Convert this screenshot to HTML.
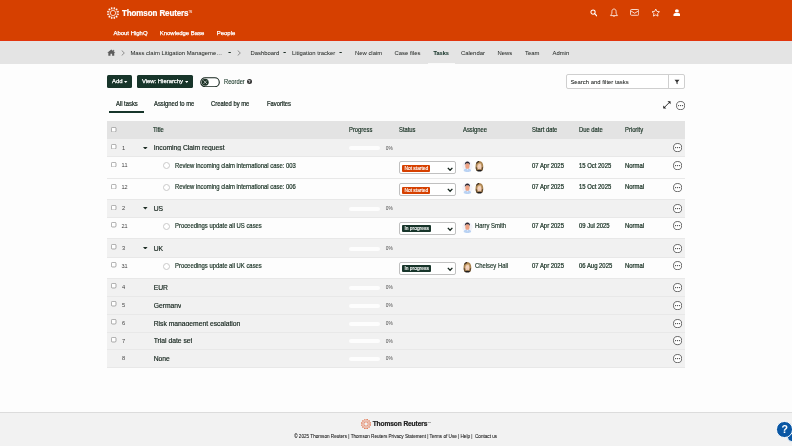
<!DOCTYPE html>
<html lang="en">
<head>
<meta charset="utf-8">
<title>Tasks - Litigation tracker</title>
<style>
*{box-sizing:border-box;margin:0;padding:0}
html,body{width:792px;height:446px;overflow:hidden;background:#fdfdfd;font-family:"Liberation Sans",Arial,sans-serif;color:#1d3a2b;-webkit-text-stroke:0.22px currentColor}
body{position:relative;will-change:transform}
.abs{position:absolute;white-space:nowrap}
#hdr{position:absolute;left:0;top:0;width:792px;height:41px;background:#d64000;border-bottom:1px solid #e2350e}
#hdr .logo-t{position:absolute;left:121.6px;top:7.2px;transform:scaleX(0.95);transform-origin:0 0;font-size:8.42px;font-weight:bold;color:#fff;letter-spacing:-0.1px;line-height:12px}
#hdr .tm{position:absolute;left:188.4px;top:10.9px;font-size:2.7px;color:#fff;line-height:4px;-webkit-text-stroke:0}
#hdr .nav{position:absolute;top:29px;font-size:5.95px;color:#fff;line-height:8px;-webkit-text-stroke:0.25px #fff}
#bc{position:absolute;left:0;top:41px;width:792px;height:23px;background:#e4e4e4}
#bc .t{position:absolute;top:7.6px;font-size:5.9px;line-height:8px;color:#2b2f2d;white-space:nowrap;-webkit-text-stroke:0.04px currentColor}
#bc .b{font-weight:bold;font-size:5.55px;color:#17352a;-webkit-text-stroke:0.1px currentColor}
.caret{position:absolute;width:0;height:0;border-left:1.9px solid transparent;border-right:1.9px solid transparent;border-top:2.2px solid #1f2f27}
.btn{position:absolute;top:74.5px;height:13.3px;background:#17352a;border-radius:1.5px;color:#fff;font-size:5.9px;line-height:13.3px;white-space:nowrap;-webkit-text-stroke:0.25px #fff}
.tab{position:absolute;top:99.7px;font-size:6.45px;transform:scaleX(0.907);transform-origin:0 0;line-height:8px;color:#14241c;white-space:nowrap}
#thead{position:absolute;left:107px;top:121px;width:578px;height:18px;background:#e3e3e3}
.th{position:absolute;top:126px;font-size:6.8px;transform:scaleX(0.858);transform-origin:0 0;line-height:8px;color:#1a3325;-webkit-text-stroke:0.2px currentColor;white-space:nowrap}
.row{position:absolute;left:107px;width:578px}
.g{background:#f1f1f1}
.w{background:#fdfdfd}
.sep{position:absolute;left:107px;width:578px;height:1px;background:#e8e8e8}
.cb{position:absolute;left:111.3px;width:5.2px;height:5.2px;border:0.7px solid #8c8c8c;border-radius:1.3px;background:#fff}
.num{position:absolute;font-size:5.7px;line-height:8px;color:#444;white-space:nowrap;-webkit-text-stroke:0}
.pt{position:absolute;left:153.7px;-webkit-text-stroke:0.17px currentColor;font-size:6.75px;line-height:9px;height:7.8px;overflow:hidden;color:#14241c;white-space:nowrap}
.ct{position:absolute;left:175px;-webkit-text-stroke:0.2px currentColor;font-size:6.4px;transform:scaleX(0.922);transform-origin:0 0;line-height:8px;color:#1a3325;white-space:nowrap}
.circ{position:absolute;left:163px;width:7px;height:7px;border:0.7px solid #c9c9c9;border-radius:50%;background:#fff}
.pb{position:absolute;left:348.6px;width:31.6px;height:4px;border-radius:2px;background:#fdfdfd}
.pc{position:absolute;left:385.8px;font-size:4.8px;line-height:6px;color:#4a4a4a;-webkit-text-stroke:0}
.dots{position:absolute;left:673px;width:9px;height:9px;border:0.8px solid #333;border-radius:50%;background:#fff}
.dots i{position:absolute;top:3.1px;width:1.2px;height:1.2px;border-radius:50%;background:#333}
.sel{position:absolute;left:399.2px;width:56.8px;height:12.7px;border:0.7px solid #c0c0c0;border-radius:2px;background:#fff}
.badge{position:absolute;left:2.2px;top:2.5px;height:6.9px;border-radius:1px;color:#fff;font-size:4.9px;line-height:6.9px;padding:0 2px;white-space:nowrap;-webkit-text-stroke:0.12px #fff}
.badge span{position:relative;top:1px}
.ns{background:#d64000}
.ip{background:#17352a}
.cell{position:absolute;font-size:6.3px;transform:scaleX(0.94);transform-origin:0 0;line-height:8px;color:#1a3325;white-space:nowrap;-webkit-text-stroke:0.24px currentColor}
.nm{font-size:6.45px;transform:scaleX(0.915) !important;transform-origin:0 0;-webkit-text-stroke:0.17px currentColor}
#foot{position:absolute;left:0;top:412px;width:792px;height:34px;background:#f2f2f2;border-top:1px solid #dcdcdc}
</style>
</head>
<body>
<div id="hdr">
  <svg class="abs" style="left:107px;top:7px" width="12" height="12" viewBox="0 0 12 12" fill="#fff"><circle cx="10.98" cy="7.32" r="0.88"/><circle cx="9.65" cy="9.64" r="0.88"/><circle cx="7.34" cy="10.97" r="0.88"/><circle cx="4.68" cy="10.98" r="0.88"/><circle cx="2.36" cy="9.65" r="0.88"/><circle cx="1.03" cy="7.34" r="0.88"/><circle cx="1.02" cy="4.68" r="0.88"/><circle cx="2.35" cy="2.36" r="0.88"/><circle cx="4.66" cy="1.03" r="0.88"/><circle cx="7.32" cy="1.02" r="0.88"/><circle cx="9.64" cy="2.35" r="0.88"/><circle cx="10.97" cy="4.66" r="0.88"/><circle cx="9.42" cy="7.97" r="0.5" opacity="0.75"/><circle cx="7.98" cy="9.42" r="0.5" opacity="0.75"/><circle cx="6.01" cy="9.95" r="0.5" opacity="0.75"/><circle cx="4.03" cy="9.42" r="0.5" opacity="0.75"/><circle cx="2.58" cy="7.98" r="0.5" opacity="0.75"/><circle cx="2.05" cy="6.01" r="0.5" opacity="0.75"/><circle cx="2.58" cy="4.03" r="0.5" opacity="0.75"/><circle cx="4.02" cy="2.58" r="0.5" opacity="0.75"/><circle cx="5.99" cy="2.05" r="0.5" opacity="0.75"/><circle cx="7.97" cy="2.58" r="0.5" opacity="0.75"/><circle cx="9.42" cy="4.02" r="0.5" opacity="0.75"/><circle cx="9.95" cy="5.99" r="0.5" opacity="0.75"/><circle cx="6" cy="6" r="2.65" fill="none" stroke="#fff" stroke-width="0.85" opacity="0.85"/></svg>
  <div class="logo-t">Thomson Reuters</div>
  <div class="tm">TM</div>
  <div class="nav" style="left:113.5px">About HighQ</div>
  <div class="nav" style="left:159.8px">Knowledge Base</div>
  <div class="nav" style="left:216.8px">People</div>
  <!-- right icons -->
  <svg class="abs" style="left:589.6px;top:9.2px" width="7.6" height="7.6" viewBox="0 0 18 18"><circle cx="7.2" cy="7.2" r="5" fill="none" stroke="#fff" stroke-width="2.4"/><path d="M11 11 L16 16" stroke="#fff" stroke-width="2.8" stroke-linecap="round"/></svg>
  <svg class="abs" style="left:609px;top:7.6px" width="10" height="10" viewBox="0 0 20 20"><path d="M10 2c-2.700 0-4.200 2.200-4.200 5v3.400c0 1.400-1.200 2.600-2.600 3.800v1h13.600v-1c-1.400-1.200-2.600-2.400-2.600-3.800V7c0-2.800-1.500-5-4.200-5z" fill="none" stroke="#fff" stroke-width="1.600" stroke-linejoin="round"/><path d="M8.200 16.500a1.900 1.900 0 0 0 3.600 0z" fill="#fff"/></svg>
  <svg class="abs" style="left:630.2px;top:9px" width="9.3" height="6.8" viewBox="0 0 20 16" preserveAspectRatio="none"><rect x="1.200" y="1.200" width="17.600" height="13.600" rx="2" fill="none" stroke="#fff" stroke-width="1.800"/><path d="M2 4.500 L10 10 L18 4.500" fill="none" stroke="#fff" stroke-width="1.800"/></svg>
  <svg class="abs" style="left:650.9px;top:7.7px" width="9.5" height="9.5" viewBox="0 0 20 20"><path d="M10 2.200l2.400 5 5.400.700-4 3.800 1 5.400L10 14.500l-4.800 2.600 1-5.400-4-3.800 5.400-.700z" fill="none" stroke="#fff" stroke-width="1.700" stroke-linejoin="round"/></svg>
  <svg class="abs" style="left:672.6px;top:8.7px" width="7.8" height="7.4" viewBox="0 0 16 18" preserveAspectRatio="none"><circle cx="8" cy="4.600" r="4" fill="#fff"/><path d="M1 17.500v-3.500c0-2.800 2-4.500 4-4.500h6c2 0 4 1.700 4 4.500v3.500z" fill="#fff"/></svg>
</div>

<div id="bc">
  <svg class="abs" style="left:107.1px;top:8.2px" width="8.6" height="7" viewBox="0 0 16 14" preserveAspectRatio="none"><path d="M8 1 L0.500 7.600 L2.500 7.600 L2.500 13.500 L6.500 13.500 L6.500 9.500 L9.500 9.500 L9.500 13.500 L13.500 13.500 L13.500 7.600 L15.500 7.600 Z" fill="#5c5c5c"/><rect x="11.500" y="1.800" width="1.800" height="3.500" fill="#5c5c5c"/></svg>
  <svg class="abs" style="left:120.500px;top:9px" width="4" height="6" viewBox="0 0 4 6"><path d="M0.700 0.500 L3.300 3 L0.700 5.500" fill="none" stroke="#777" stroke-width="0.800"/></svg>
  <div class="t" style="left:130.4px">Mass claim Litigation Manageme…</div>
  <svg class="abs" style="left:228.0px;top:10.6px" width="3.3" height="1.9" viewBox="0 0 3.3 1.9"><path d="M0 0H3.3L1.65 1.9z" fill="#1f2f27"/></svg>
  <svg class="abs" style="left:237px;top:9px" width="4" height="6" viewBox="0 0 4 6"><path d="M0.700 0.500 L3.300 3 L0.700 5.500" fill="none" stroke="#777" stroke-width="0.800"/></svg>
  <div class="t" style="left:250.500px">Dashboard</div>
  <svg class="abs" style="left:282.6px;top:10.6px" width="3.3" height="1.9" viewBox="0 0 3.3 1.9"><path d="M0 0H3.3L1.65 1.9z" fill="#1f2f27"/></svg>
  <div class="t" style="left:292px">Litigation tracker</div>
  <svg class="abs" style="left:338.7px;top:10.6px" width="3.3" height="1.9" viewBox="0 0 3.3 1.9"><path d="M0 0H3.3L1.65 1.9z" fill="#1f2f27"/></svg>
  <div class="abs" style="left:427.5px;top:21.8px;width:27.5px;height:1.4px;background:#fafafa"></div>
  <div class="t" style="left:355px">New claim</div>
  <div class="t" style="left:394.500px">Case files</div>
  <div class="t b" style="left:433.500px">Tasks</div>
  <div class="t" style="left:461px">Calendar</div>
  <div class="t" style="left:497.500px">News</div>
  <div class="t" style="left:525px">Team</div>
  <div class="t" style="left:552.500px">Admin</div>
</div>

<!-- toolbar -->
<div class="btn" style="left:107px;width:25.4px;padding-left:5.1px">Add</div>
<svg class="abs" style="left:124.3px;top:80.8px" width="3.4" height="1.9" viewBox="0 0 3.4 1.9"><path d="M0 0H3.4L1.7 1.9z" fill="#fff"/></svg>
<div class="btn" style="left:137.1px;width:55.6px;padding-left:4.8px">View: Hierarchy</div>
<svg class="abs" style="left:184.9px;top:80.8px" width="3.4" height="1.9" viewBox="0 0 3.4 1.9"><path d="M0 0H3.4L1.7 1.9z" fill="#fff"/></svg>
<svg class="abs" style="left:199.6px;top:76.600px" width="20" height="10.400" viewBox="0 0 20 10.400"><rect x="0.700" y="0.700" width="18.600" height="9" rx="4.500" fill="#fff" stroke="#14241c" stroke-width="1.100"/><circle cx="5.200" cy="5.200" r="3.500" fill="#1d3327"/><path d="M3.500 3.500L6.900 6.900M6.900 3.500L3.500 6.900" stroke="#e8e8e8" stroke-width="0.700"/></svg>
<div class="abs" style="left:223.7px;top:78.2px;font-size:6.35px;transform:scaleX(0.905);transform-origin:0 0;line-height:8px;color:#1d3a2b;-webkit-text-stroke:0.12px currentColor">Reorder</div>
<div class="abs" style="left:246.6px;top:79.2px;width:5.2px;height:5.2px;border-radius:50%;background:#333;color:#fff;font-size:4.2px;line-height:5.2px;-webkit-text-stroke:0;text-align:center;font-weight:bold">?</div>

<div class="abs" style="left:566.2px;top:74.2px;width:118.6px;height:14.8px;border:0.800px solid #cfcfcf;border-radius:2px;background:#fff"></div>
<div class="abs" style="left:668px;top:74.2px;width:0.800px;height:14.8px;background:#cfcfcf"></div>
<div class="abs" style="left:570.4px;top:77.9px;font-size:5.9px;line-height:8px;color:#1c1f1d;-webkit-text-stroke:0.05px currentColor">Search and filter tasks</div>
<svg class="abs" style="left:673.500px;top:79px" width="6" height="6" viewBox="0 0 12 12"><path d="M1 1.500h10L7.200 6v4.500L4.800 9V6z" fill="#333"/></svg>

<!-- tabs -->
<div class="tab" style="left:115.500px">All tasks</div>
<div class="abs" style="left:109px;top:110.500px;width:35px;height:2px;background:#17352a"></div>
<div class="tab" style="left:154px">Assigned to me</div>
<div class="tab" style="left:211px">Created by me</div>
<div class="tab" style="left:266.500px">Favorites</div>
<svg class="abs" style="left:662.8px;top:101.2px" width="7.8" height="7.8" viewBox="0 0 16 16"><path d="M15.500 0.500V6.800L9.200 0.500ZM0.500 15.500V9.200L6.800 15.500Z" fill="#222"/><path d="M12.500 3.500L3.500 12.500" stroke="#222" stroke-width="1.900"/></svg>
<svg class="abs" style="left:676px;top:100.7px" width="9.2" height="9.2" viewBox="0 0 9.2 9.2"><circle cx="4.6" cy="4.6" r="4.1" fill="#fff" stroke="#3a3a3a" stroke-width="0.75"/><circle cx="2.6" cy="4.6" r="0.62" fill="#333"/><circle cx="4.6" cy="4.6" r="0.62" fill="#333"/><circle cx="6.6" cy="4.6" r="0.62" fill="#333"/></svg>

<!-- table header -->
<div id="thead"></div>
<svg class="abs" style="left:111.2px;top:126.7px" width="5.4" height="5.4" viewBox="0 0 5.4 5.4"><rect x="0.4" y="0.4" width="4.6" height="4.6" rx="1.1" fill="#fff" stroke="#7d7d7d" stroke-width="0.65"/></svg>
<div class="th" style="left:153px">Title</div>
<div class="th" style="left:348.500px">Progress</div>
<div class="th" style="left:399px">Status</div>
<div class="th" style="left:462.500px">Assignee</div>
<div class="th" style="left:532px">Start date</div>
<div class="th" style="left:578.500px">Due date</div>
<div class="th" style="left:625px">Priority</div>

<div id="rows">
<div class="row g" style="top:138.5px;height:18.0px"></div>
<svg class="abs" style="left:111.2px;top:143.9px" width="5.4" height="5.4" viewBox="0 0 5.4 5.4"><rect x="0.4" y="0.4" width="4.6" height="4.6" rx="1.1" fill="#fff" stroke="#7d7d7d" stroke-width="0.65"/></svg>
<div class="num" style="left:122px;top:143.5px">1</div>
<svg class="abs" style="left:143.3px;top:146.5px" width="4.6" height="2.6" viewBox="0 0 4.6 2.6"><path d="M0 0H4.6L2.3 2.6z" fill="#1f2f27"/></svg>
<div class="pt" style="top:143.2px">Incoming Claim request</div>
<div class="pb" style="top:146.2px"></div>
<div class="pc" style="top:145.5px">0%</div>
<svg class="abs" style="left:672.6px;top:143.1px" width="9.2" height="9.2" viewBox="0 0 9.2 9.2"><circle cx="4.6" cy="4.6" r="4.1" fill="#fff" stroke="#3a3a3a" stroke-width="0.75"/><circle cx="2.6" cy="4.6" r="0.62" fill="#333"/><circle cx="4.6" cy="4.6" r="0.62" fill="#333"/><circle cx="6.6" cy="4.6" r="0.62" fill="#333"/></svg>
<div class="row w" style="top:156.5px;height:21.8px"></div>
<svg class="abs" style="left:111.2px;top:161.9px" width="5.4" height="5.4" viewBox="0 0 5.4 5.4"><rect x="0.4" y="0.4" width="4.6" height="4.6" rx="1.1" fill="#fff" stroke="#7d7d7d" stroke-width="0.65"/></svg>
<div class="num" style="left:121.500px;top:161.0px;letter-spacing:-0.75px;font-size:5.5px">1.1</div>
<div class="circ" style="top:162.0px"></div>
<div class="ct" style="top:161.6px">Review incoming claim international case: 003</div>
<div class="sel" style="top:161.4px"><div class="badge ns"><span>Not started</span></div><svg class="abs" style="left:47.300px;top:4.300px" width="6.200" height="4.400" viewBox="0 0 12.400 8.800"><path d="M1.600 1.800L6.200 6.600L10.800 1.800" fill="none" stroke="#14241c" stroke-width="2.600"/></svg></div>
<svg class="abs" style="left:462.1px;top:160.3px" width="11" height="12" viewBox="0 0 11 12"><circle cx="5.4" cy="6.1" r="5.2" fill="#f2f2f9"/><path d="M1.6 11c.3-1.900 1.600-2.800 3.800-2.800s3.500.900 3.800 2.800c-1 .700-2.300 1.100-3.800 1.100s-2.800-.400-3.800-1.100z" fill="#b9d2f3"/><path d="M4.700 8.300h1.400l-.700 2.300z" fill="#f6f6fb"/><ellipse cx="5.400" cy="5.900" rx="2.150" ry="2.900" fill="#eea283"/><path d="M2.900 5.200c-.300-2.400.800-3.700 2.500-3.700s2.900 1.300 2.500 3.700c-.400-1.300-1.200-1.900-2.500-1.900s-2.100.600-2.500 1.900z" fill="#2b2630"/></svg>
<svg class="abs" style="left:474.2px;top:160.3px" width="11" height="12" viewBox="0 0 11 12"><path d="M1.500 6.400c0-3.300 1.500-5.400 3.900-5.400s3.900 2.100 3.900 5.400c0 2-.500 3.700-1.400 4.700h-5c-.900-1-1.400-2.700-1.400-4.700z" fill="#a98350"/><path d="M2.200 3c.700-1.400 1.800-2 3-2l-.300 1.300c-1.100.200-2 .900-2.500 2.200z" fill="#3a2c22"/><path d="M1.700 7.500c.100 1.500.600 2.800 1.200 3.600l.800-.600c-.700-1-1-2.200-1-3.600z" fill="#5c4630"/><path d="M9.100 7.500c-.100 1.500-.600 2.800-1.200 3.600l-.800-.600c.700-1 1-2.200 1-3.600z" fill="#5c4630"/><ellipse cx="5.400" cy="6.400" rx="2.050" ry="2.900" fill="#f3d2bd"/><path d="M3.300 5.500c.200-1.700 1.100-2.500 2.500-2.500 1.100 0 1.900.600 2.200 2.100-.800-.800-1.600-1.100-2.500-1-1 .100-1.600.500-2.200 1.400z" fill="#d2ad74"/><path d="M4.500 7.900q.900.700 1.800 0" fill="none" stroke="#c98a78" stroke-width="0.350"/><path d="M2.700 10.700c.700-.700 1.600-1 2.700-1s2 .300 2.700 1c-.700.600-1.600.900-2.700.900s-2-.300-2.700-.900z" fill="#1e1c1c"/></svg>
<div class="cell" style="left:532px;top:161.6px">07 Apr 2025</div>
<div class="cell" style="left:578.500px;top:161.6px">15 Oct 2025</div>
<div class="cell" style="left:625px;top:161.6px">Normal</div>
<svg class="abs" style="left:672.6px;top:160.7px" width="9.2" height="9.2" viewBox="0 0 9.2 9.2"><circle cx="4.6" cy="4.6" r="4.1" fill="#fff" stroke="#3a3a3a" stroke-width="0.75"/><circle cx="2.6" cy="4.6" r="0.62" fill="#333"/><circle cx="4.6" cy="4.6" r="0.62" fill="#333"/><circle cx="6.6" cy="4.6" r="0.62" fill="#333"/></svg>
<div class="row w" style="top:178.3px;height:21.4px"></div>
<svg class="abs" style="left:111.2px;top:183.7px" width="5.4" height="5.4" viewBox="0 0 5.4 5.4"><rect x="0.4" y="0.4" width="4.6" height="4.6" rx="1.1" fill="#fff" stroke="#7d7d7d" stroke-width="0.65"/></svg>
<div class="num" style="left:121.500px;top:182.8px;letter-spacing:-0.75px;font-size:5.5px">1.2</div>
<div class="circ" style="top:183.8px"></div>
<div class="ct" style="top:183.4px">Review incoming claim international case: 006</div>
<div class="sel" style="top:183.2px"><div class="badge ns"><span>Not started</span></div><svg class="abs" style="left:47.300px;top:4.300px" width="6.200" height="4.400" viewBox="0 0 12.400 8.800"><path d="M1.600 1.800L6.200 6.600L10.800 1.800" fill="none" stroke="#14241c" stroke-width="2.600"/></svg></div>
<svg class="abs" style="left:462.1px;top:182.10000000000002px" width="11" height="12" viewBox="0 0 11 12"><circle cx="5.4" cy="6.1" r="5.2" fill="#f2f2f9"/><path d="M1.6 11c.3-1.900 1.600-2.800 3.800-2.800s3.500.900 3.800 2.800c-1 .700-2.300 1.100-3.800 1.100s-2.800-.400-3.800-1.100z" fill="#b9d2f3"/><path d="M4.700 8.300h1.400l-.700 2.300z" fill="#f6f6fb"/><ellipse cx="5.400" cy="5.900" rx="2.150" ry="2.900" fill="#eea283"/><path d="M2.900 5.200c-.300-2.400.800-3.700 2.500-3.700s2.900 1.300 2.500 3.700c-.400-1.300-1.200-1.900-2.500-1.900s-2.100.600-2.500 1.900z" fill="#2b2630"/></svg>
<svg class="abs" style="left:474.2px;top:182.10000000000002px" width="11" height="12" viewBox="0 0 11 12"><path d="M1.500 6.400c0-3.300 1.500-5.400 3.900-5.400s3.900 2.100 3.900 5.400c0 2-.500 3.700-1.400 4.700h-5c-.900-1-1.400-2.700-1.400-4.700z" fill="#a98350"/><path d="M2.200 3c.700-1.400 1.800-2 3-2l-.300 1.300c-1.100.200-2 .900-2.500 2.200z" fill="#3a2c22"/><path d="M1.700 7.500c.100 1.500.600 2.800 1.200 3.600l.800-.600c-.700-1-1-2.200-1-3.600z" fill="#5c4630"/><path d="M9.100 7.500c-.100 1.500-.600 2.800-1.200 3.600l-.800-.600c.700-1 1-2.200 1-3.600z" fill="#5c4630"/><ellipse cx="5.400" cy="6.400" rx="2.050" ry="2.900" fill="#f3d2bd"/><path d="M3.300 5.500c.200-1.700 1.100-2.500 2.500-2.500 1.100 0 1.900.600 2.200 2.100-.800-.800-1.600-1.100-2.500-1-1 .100-1.600.500-2.200 1.400z" fill="#d2ad74"/><path d="M4.500 7.900q.900.700 1.800 0" fill="none" stroke="#c98a78" stroke-width="0.350"/><path d="M2.700 10.700c.700-.700 1.600-1 2.700-1s2 .300 2.700 1c-.700.600-1.600.900-2.700.900s-2-.300-2.700-.900z" fill="#1e1c1c"/></svg>
<div class="cell" style="left:532px;top:183.4px">07 Apr 2025</div>
<div class="cell" style="left:578.500px;top:183.4px">15 Oct 2025</div>
<div class="cell" style="left:625px;top:183.4px">Normal</div>
<svg class="abs" style="left:672.6px;top:182.5px" width="9.2" height="9.2" viewBox="0 0 9.2 9.2"><circle cx="4.6" cy="4.6" r="4.1" fill="#fff" stroke="#3a3a3a" stroke-width="0.75"/><circle cx="2.6" cy="4.6" r="0.62" fill="#333"/><circle cx="4.6" cy="4.6" r="0.62" fill="#333"/><circle cx="6.6" cy="4.6" r="0.62" fill="#333"/></svg>
<div class="row g" style="top:199.7px;height:17.3px"></div>
<svg class="abs" style="left:111.2px;top:205.1px" width="5.4" height="5.4" viewBox="0 0 5.4 5.4"><rect x="0.4" y="0.4" width="4.6" height="4.6" rx="1.1" fill="#fff" stroke="#7d7d7d" stroke-width="0.65"/></svg>
<div class="num" style="left:122px;top:204.3px">2</div>
<svg class="abs" style="left:143.3px;top:207.3px" width="4.6" height="2.6" viewBox="0 0 4.6 2.6"><path d="M0 0H4.6L2.3 2.6z" fill="#1f2f27"/></svg>
<div class="pt" style="top:204.0px">US</div>
<div class="pb" style="top:207.0px"></div>
<div class="pc" style="top:206.3px">0%</div>
<svg class="abs" style="left:672.6px;top:203.9px" width="9.2" height="9.2" viewBox="0 0 9.2 9.2"><circle cx="4.6" cy="4.6" r="4.1" fill="#fff" stroke="#3a3a3a" stroke-width="0.75"/><circle cx="2.6" cy="4.6" r="0.62" fill="#333"/><circle cx="4.6" cy="4.6" r="0.62" fill="#333"/><circle cx="6.6" cy="4.6" r="0.62" fill="#333"/></svg>
<div class="row w" style="top:217px;height:21.8px"></div>
<svg class="abs" style="left:111.2px;top:222.4px" width="5.4" height="5.4" viewBox="0 0 5.4 5.4"><rect x="0.4" y="0.4" width="4.6" height="4.6" rx="1.1" fill="#fff" stroke="#7d7d7d" stroke-width="0.65"/></svg>
<div class="num" style="left:121.500px;top:221.5px;letter-spacing:-0.75px;font-size:5.5px">2.1</div>
<div class="circ" style="top:222.5px"></div>
<div class="ct" style="top:222.1px">Proceedings update all US cases</div>
<div class="sel" style="top:221.9px"><div class="badge ip"><span>In progress</span></div><svg class="abs" style="left:47.300px;top:4.300px" width="6.200" height="4.400" viewBox="0 0 12.400 8.800"><path d="M1.600 1.800L6.200 6.600L10.800 1.800" fill="none" stroke="#14241c" stroke-width="2.600"/></svg></div>
<svg class="abs" style="left:462.1px;top:220.8px" width="11" height="12" viewBox="0 0 11 12"><circle cx="5.4" cy="6.1" r="5.2" fill="#f2f2f9"/><path d="M1.6 11c.3-1.900 1.600-2.800 3.800-2.800s3.500.900 3.800 2.800c-1 .700-2.300 1.100-3.800 1.100s-2.800-.400-3.800-1.100z" fill="#b9d2f3"/><path d="M4.700 8.300h1.400l-.700 2.300z" fill="#f6f6fb"/><ellipse cx="5.400" cy="5.900" rx="2.150" ry="2.900" fill="#eea283"/><path d="M2.900 5.200c-.300-2.400.800-3.700 2.500-3.700s2.900 1.300 2.500 3.700c-.400-1.300-1.200-1.900-2.500-1.900s-2.100.600-2.500 1.900z" fill="#2b2630"/></svg>
<div class="cell nm" style="left:474.800px;top:221.7px">Harry Smith</div>
<div class="cell" style="left:532px;top:222.1px">07 Apr 2025</div>
<div class="cell" style="left:578.500px;top:222.1px">09 Jul 2025</div>
<div class="cell" style="left:625px;top:222.1px">Normal</div>
<svg class="abs" style="left:672.6px;top:221.2px" width="9.2" height="9.2" viewBox="0 0 9.2 9.2"><circle cx="4.6" cy="4.6" r="4.1" fill="#fff" stroke="#3a3a3a" stroke-width="0.75"/><circle cx="2.6" cy="4.6" r="0.62" fill="#333"/><circle cx="4.6" cy="4.6" r="0.62" fill="#333"/><circle cx="6.6" cy="4.6" r="0.62" fill="#333"/></svg>
<div class="row g" style="top:238.8px;height:18.2px"></div>
<svg class="abs" style="left:111.2px;top:244.2px" width="5.4" height="5.4" viewBox="0 0 5.4 5.4"><rect x="0.4" y="0.4" width="4.6" height="4.6" rx="1.1" fill="#fff" stroke="#7d7d7d" stroke-width="0.65"/></svg>
<div class="num" style="left:122px;top:243.9px">3</div>
<svg class="abs" style="left:143.3px;top:246.9px" width="4.6" height="2.6" viewBox="0 0 4.6 2.6"><path d="M0 0H4.6L2.3 2.6z" fill="#1f2f27"/></svg>
<div class="pt" style="top:243.6px">UK</div>
<div class="pb" style="top:246.6px"></div>
<div class="pc" style="top:245.9px">0%</div>
<svg class="abs" style="left:672.6px;top:243.5px" width="9.2" height="9.2" viewBox="0 0 9.2 9.2"><circle cx="4.6" cy="4.6" r="4.1" fill="#fff" stroke="#3a3a3a" stroke-width="0.75"/><circle cx="2.6" cy="4.6" r="0.62" fill="#333"/><circle cx="4.6" cy="4.6" r="0.62" fill="#333"/><circle cx="6.6" cy="4.6" r="0.62" fill="#333"/></svg>
<div class="row w" style="top:257px;height:21.0px"></div>
<svg class="abs" style="left:111.2px;top:262.4px" width="5.4" height="5.4" viewBox="0 0 5.4 5.4"><rect x="0.4" y="0.4" width="4.6" height="4.6" rx="1.1" fill="#fff" stroke="#7d7d7d" stroke-width="0.65"/></svg>
<div class="num" style="left:121.500px;top:261.5px;letter-spacing:-0.75px;font-size:5.5px">3.1</div>
<div class="circ" style="top:262.5px"></div>
<div class="ct" style="top:262.1px">Proceedings update all UK cases</div>
<div class="sel" style="top:261.9px"><div class="badge ip"><span>In progress</span></div><svg class="abs" style="left:47.300px;top:4.300px" width="6.200" height="4.400" viewBox="0 0 12.400 8.800"><path d="M1.600 1.800L6.200 6.600L10.800 1.800" fill="none" stroke="#14241c" stroke-width="2.600"/></svg></div>
<svg class="abs" style="left:462.2px;top:260.8px" width="11" height="12" viewBox="0 0 11 12"><path d="M1.500 6.400c0-3.300 1.500-5.400 3.900-5.400s3.900 2.100 3.900 5.400c0 2-.500 3.700-1.400 4.700h-5c-.900-1-1.400-2.700-1.400-4.700z" fill="#a98350"/><path d="M2.200 3c.700-1.400 1.800-2 3-2l-.300 1.300c-1.100.200-2 .900-2.500 2.200z" fill="#3a2c22"/><path d="M1.700 7.500c.100 1.500.600 2.800 1.200 3.600l.800-.600c-.700-1-1-2.200-1-3.600z" fill="#5c4630"/><path d="M9.100 7.500c-.100 1.500-.600 2.800-1.200 3.600l-.800-.600c.700-1 1-2.200 1-3.600z" fill="#5c4630"/><ellipse cx="5.400" cy="6.400" rx="2.050" ry="2.900" fill="#f3d2bd"/><path d="M3.300 5.500c.200-1.700 1.100-2.500 2.500-2.500 1.100 0 1.900.600 2.200 2.100-.800-.800-1.600-1.100-2.500-1-1 .100-1.600.500-2.200 1.400z" fill="#d2ad74"/><path d="M4.500 7.900q.900.700 1.800 0" fill="none" stroke="#c98a78" stroke-width="0.350"/><path d="M2.700 10.700c.700-.700 1.600-1 2.700-1s2 .300 2.700 1c-.700.600-1.600.900-2.700.900s-2-.300-2.700-.900z" fill="#1e1c1c"/></svg>
<div class="cell nm" style="left:474.800px;top:261.7px">Chelsey Hall</div>
<div class="cell" style="left:532px;top:262.1px">07 Apr 2025</div>
<div class="cell" style="left:578.500px;top:262.1px">06 Aug 2025</div>
<div class="cell" style="left:625px;top:262.1px">Normal</div>
<svg class="abs" style="left:672.6px;top:261.2px" width="9.2" height="9.2" viewBox="0 0 9.2 9.2"><circle cx="4.6" cy="4.6" r="4.1" fill="#fff" stroke="#3a3a3a" stroke-width="0.75"/><circle cx="2.6" cy="4.6" r="0.62" fill="#333"/><circle cx="4.6" cy="4.6" r="0.62" fill="#333"/><circle cx="6.6" cy="4.6" r="0.62" fill="#333"/></svg>
<div class="row g" style="top:278px;height:18.0px"></div>
<svg class="abs" style="left:111.2px;top:283.4px" width="5.4" height="5.4" viewBox="0 0 5.4 5.4"><rect x="0.4" y="0.4" width="4.6" height="4.6" rx="1.1" fill="#fff" stroke="#7d7d7d" stroke-width="0.65"/></svg>
<div class="num" style="left:122px;top:283.0px">4</div>
<div class="pt" style="top:282.7px">EUR</div>
<div class="pb" style="top:285.7px"></div>
<div class="pc" style="top:285.0px">0%</div>
<svg class="abs" style="left:672.6px;top:282.6px" width="9.2" height="9.2" viewBox="0 0 9.2 9.2"><circle cx="4.6" cy="4.6" r="4.1" fill="#fff" stroke="#3a3a3a" stroke-width="0.75"/><circle cx="2.6" cy="4.6" r="0.62" fill="#333"/><circle cx="4.6" cy="4.6" r="0.62" fill="#333"/><circle cx="6.6" cy="4.6" r="0.62" fill="#333"/></svg>
<div class="row g" style="top:296px;height:18.0px"></div>
<svg class="abs" style="left:111.2px;top:301.4px" width="5.4" height="5.4" viewBox="0 0 5.4 5.4"><rect x="0.4" y="0.4" width="4.6" height="4.6" rx="1.1" fill="#fff" stroke="#7d7d7d" stroke-width="0.65"/></svg>
<div class="num" style="left:122px;top:301.0px">5</div>
<div class="pt" style="top:300.7px">Germany</div>
<div class="pb" style="top:303.7px"></div>
<div class="pc" style="top:303.0px">0%</div>
<svg class="abs" style="left:672.6px;top:300.6px" width="9.2" height="9.2" viewBox="0 0 9.2 9.2"><circle cx="4.6" cy="4.6" r="4.1" fill="#fff" stroke="#3a3a3a" stroke-width="0.75"/><circle cx="2.6" cy="4.6" r="0.62" fill="#333"/><circle cx="4.6" cy="4.6" r="0.62" fill="#333"/><circle cx="6.6" cy="4.6" r="0.62" fill="#333"/></svg>
<div class="row g" style="top:314px;height:18.0px"></div>
<svg class="abs" style="left:111.2px;top:319.4px" width="5.4" height="5.4" viewBox="0 0 5.4 5.4"><rect x="0.4" y="0.4" width="4.6" height="4.6" rx="1.1" fill="#fff" stroke="#7d7d7d" stroke-width="0.65"/></svg>
<div class="num" style="left:122px;top:319.0px">6</div>
<div class="pt" style="top:318.7px">Risk management escalation</div>
<div class="pb" style="top:321.7px"></div>
<div class="pc" style="top:321.0px">0%</div>
<svg class="abs" style="left:672.6px;top:318.6px" width="9.2" height="9.2" viewBox="0 0 9.2 9.2"><circle cx="4.6" cy="4.6" r="4.1" fill="#fff" stroke="#3a3a3a" stroke-width="0.75"/><circle cx="2.6" cy="4.6" r="0.62" fill="#333"/><circle cx="4.6" cy="4.6" r="0.62" fill="#333"/><circle cx="6.6" cy="4.6" r="0.62" fill="#333"/></svg>
<div class="row g" style="top:332px;height:17.5px"></div>
<svg class="abs" style="left:111.2px;top:337.4px" width="5.4" height="5.4" viewBox="0 0 5.4 5.4"><rect x="0.4" y="0.4" width="4.6" height="4.6" rx="1.1" fill="#fff" stroke="#7d7d7d" stroke-width="0.65"/></svg>
<div class="num" style="left:122px;top:336.8px">7</div>
<div class="pt" style="top:336.4px">Trial date set</div>
<div class="pb" style="top:339.4px"></div>
<div class="pc" style="top:338.8px">0%</div>
<svg class="abs" style="left:672.6px;top:336.4px" width="9.2" height="9.2" viewBox="0 0 9.2 9.2"><circle cx="4.6" cy="4.6" r="4.1" fill="#fff" stroke="#3a3a3a" stroke-width="0.75"/><circle cx="2.6" cy="4.6" r="0.62" fill="#333"/><circle cx="4.6" cy="4.6" r="0.62" fill="#333"/><circle cx="6.6" cy="4.6" r="0.62" fill="#333"/></svg>
<div class="row g" style="top:349.5px;height:17.5px"></div>
<div class="num" style="left:122px;top:354.2px">8</div>
<div class="pt" style="top:353.9px">None</div>
<div class="pb" style="top:356.9px"></div>
<div class="pc" style="top:356.2px">0%</div>
<svg class="abs" style="left:672.6px;top:353.9px" width="9.2" height="9.2" viewBox="0 0 9.2 9.2"><circle cx="4.6" cy="4.6" r="4.1" fill="#fff" stroke="#3a3a3a" stroke-width="0.75"/><circle cx="2.6" cy="4.6" r="0.62" fill="#333"/><circle cx="4.6" cy="4.6" r="0.62" fill="#333"/><circle cx="6.6" cy="4.6" r="0.62" fill="#333"/></svg>
<div class="sep" style="top:156.0px"></div>
<div class="sep" style="top:177.8px"></div>
<div class="sep" style="top:199.2px"></div>
<div class="sep" style="top:216.5px"></div>
<div class="sep" style="top:238.3px"></div>
<div class="sep" style="top:256.5px"></div>
<div class="sep" style="top:277.5px"></div>
<div class="sep" style="top:295.5px"></div>
<div class="sep" style="top:313.5px"></div>
<div class="sep" style="top:331.5px"></div>
<div class="sep" style="top:349.0px"></div>
<div class="sep" style="top:366.5px"></div>
</div><!--endrows-->

<div id="foot"></div>
<svg class="abs" style="left:360.5px;top:418.5px" width="10" height="10" viewBox="0 0 12 12" fill="#dc4a18"><circle cx="10.98" cy="7.32" r="0.88"/><circle cx="9.65" cy="9.64" r="0.88"/><circle cx="7.34" cy="10.97" r="0.88"/><circle cx="4.68" cy="10.98" r="0.88"/><circle cx="2.36" cy="9.65" r="0.88"/><circle cx="1.03" cy="7.34" r="0.88"/><circle cx="1.02" cy="4.68" r="0.88"/><circle cx="2.35" cy="2.36" r="0.88"/><circle cx="4.66" cy="1.03" r="0.88"/><circle cx="7.32" cy="1.02" r="0.88"/><circle cx="9.64" cy="2.35" r="0.88"/><circle cx="10.97" cy="4.66" r="0.88"/><circle cx="9.42" cy="7.97" r="0.5" opacity="0.75"/><circle cx="7.98" cy="9.42" r="0.5" opacity="0.75"/><circle cx="6.01" cy="9.95" r="0.5" opacity="0.75"/><circle cx="4.03" cy="9.42" r="0.5" opacity="0.75"/><circle cx="2.58" cy="7.98" r="0.5" opacity="0.75"/><circle cx="2.05" cy="6.01" r="0.5" opacity="0.75"/><circle cx="2.58" cy="4.03" r="0.5" opacity="0.75"/><circle cx="4.02" cy="2.58" r="0.5" opacity="0.75"/><circle cx="5.99" cy="2.05" r="0.5" opacity="0.75"/><circle cx="7.97" cy="2.58" r="0.5" opacity="0.75"/><circle cx="9.42" cy="4.02" r="0.5" opacity="0.75"/><circle cx="9.95" cy="5.99" r="0.5" opacity="0.75"/><circle cx="6" cy="6" r="2.65" fill="none" stroke="#dc4a18" stroke-width="0.85" opacity="0.85"/></svg>
<div class="abs" style="left:372.7px;top:418.8px;font-size:6.6px;font-weight:bold;line-height:10px;color:#222;letter-spacing:-0.100px">Thomson Reuters</div>
<div class="abs" style="left:427.5px;top:420.6px;font-size:2.4px;line-height:4px;color:#222;-webkit-text-stroke:0">TM</div>
<div class="abs" style="left:294.2px;top:433.7px;font-size:4.62px;line-height:6px;color:#222;-webkit-text-stroke:0.08px #222">© 2025 Thomson Reuters | Thomson Reuters Privacy Statement | Terms of Use | Help | &nbsp;Contact us</div>
<div class="abs" style="left:786.6px;top:432.6px;width:9px;height:9px;border-radius:50%;background:#0a57a4;border:0.8px solid #fff"></div><div class="abs" style="left:776.3px;top:421.2px;width:16.4px;height:16.4px;border-radius:50%;background:#0a57a4;border:0.8px solid #fff;color:#fff;font-size:10.6px;font-weight:bold;line-height:15.4px;text-align:center;padding-left:0.6px;-webkit-text-stroke:0">?</div>
</body>
</html>
